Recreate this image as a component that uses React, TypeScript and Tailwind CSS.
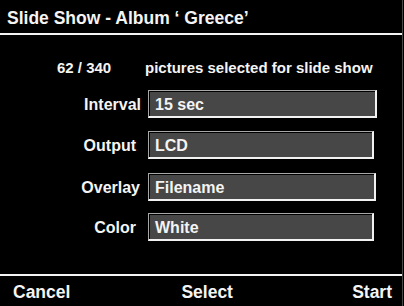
import React from 'react';

type Field = {
  label: string;
  value: string;
  labelPad: string;
  boxWidth: string;
  top: string;
};

const fields: Field[] = [
  { label: 'Interval', value: '15 sec', labelPad: 'pr-[7px]', boxWidth: 'w-[229px]', top: 'mt-[13px]' },
  { label: 'Output', value: 'LCD', labelPad: 'pr-[12px]', boxWidth: 'w-[226px]', top: 'mt-[13px]' },
  { label: 'Overlay', value: 'Filename', labelPad: 'pr-[8px]', boxWidth: 'w-[228px]', top: 'mt-[14px]' },
  { label: 'Color', value: 'White', labelPad: 'pr-[12px]', boxWidth: 'w-[226px]', top: 'mt-[12px]' },
];

function FieldRow({ field }: { field: Field }) {
  return (
    <div className={`flex items-center ${field.top}`}>
      <div className={`w-[148px] text-right text-[16px] leading-[19px] ${field.labelPad}`}>{field.label}</div>
      <div
        className={`h-[28px] ${field.boxWidth} border-t border-l border-t-[#a8a8a8] border-l-[#a8a8a8] border-b-2 border-r-2 border-b-[#f2f2f2] border-r-[#f2f2f2] bg-[#474747] shadow-[inset_1px_1px_0_#000] pl-[6px] pt-[4px] text-[16px] leading-[19px]`}
      >
        {field.value}
      </div>
    </div>
  );
}

export default function App() {
  return (
    <div
      className="flex h-[306px] w-[404px] overflow-hidden bg-black text-[#f4f4f4] font-bold"
      style={{ fontFamily: '"Liberation Sans", Arial, sans-serif' }}
    >
      <div className="flex w-[402px] flex-col">
        <header className="pt-[8px]">
          <h1 className="pl-[7px] text-[17.5px] leading-[20px]">Slide Show - Album ‘ Greece’</h1>
          <div className="mt-[5px] h-[2px] bg-[#f2f2f2]" />
        </header>

        <div className="mt-[24px] flex text-[15px] leading-[18px]">
          <span className="w-[145px] pl-[57px]">62 / 340</span>
          <span>pictures selected for slide show</span>
        </div>

        {fields.map((f) => (
          <FieldRow key={f.label} field={f} />
        ))}

        <div className="flex-1" />
        <div className="h-[2px] bg-[#f2f2f2]" />
        <footer className="flex h-[30px] pt-[6px] text-[17.5px] leading-[20px]">
          <span className="pl-[13px]">Cancel</span>
          <span className="ml-[111px]">Select</span>
          <span className="ml-auto pr-[10px]">Start</span>
        </footer>
      </div>
      <div className="w-px bg-[#4a4a4a]" />
      <div className="w-px bg-black" />
    </div>
  );
}
